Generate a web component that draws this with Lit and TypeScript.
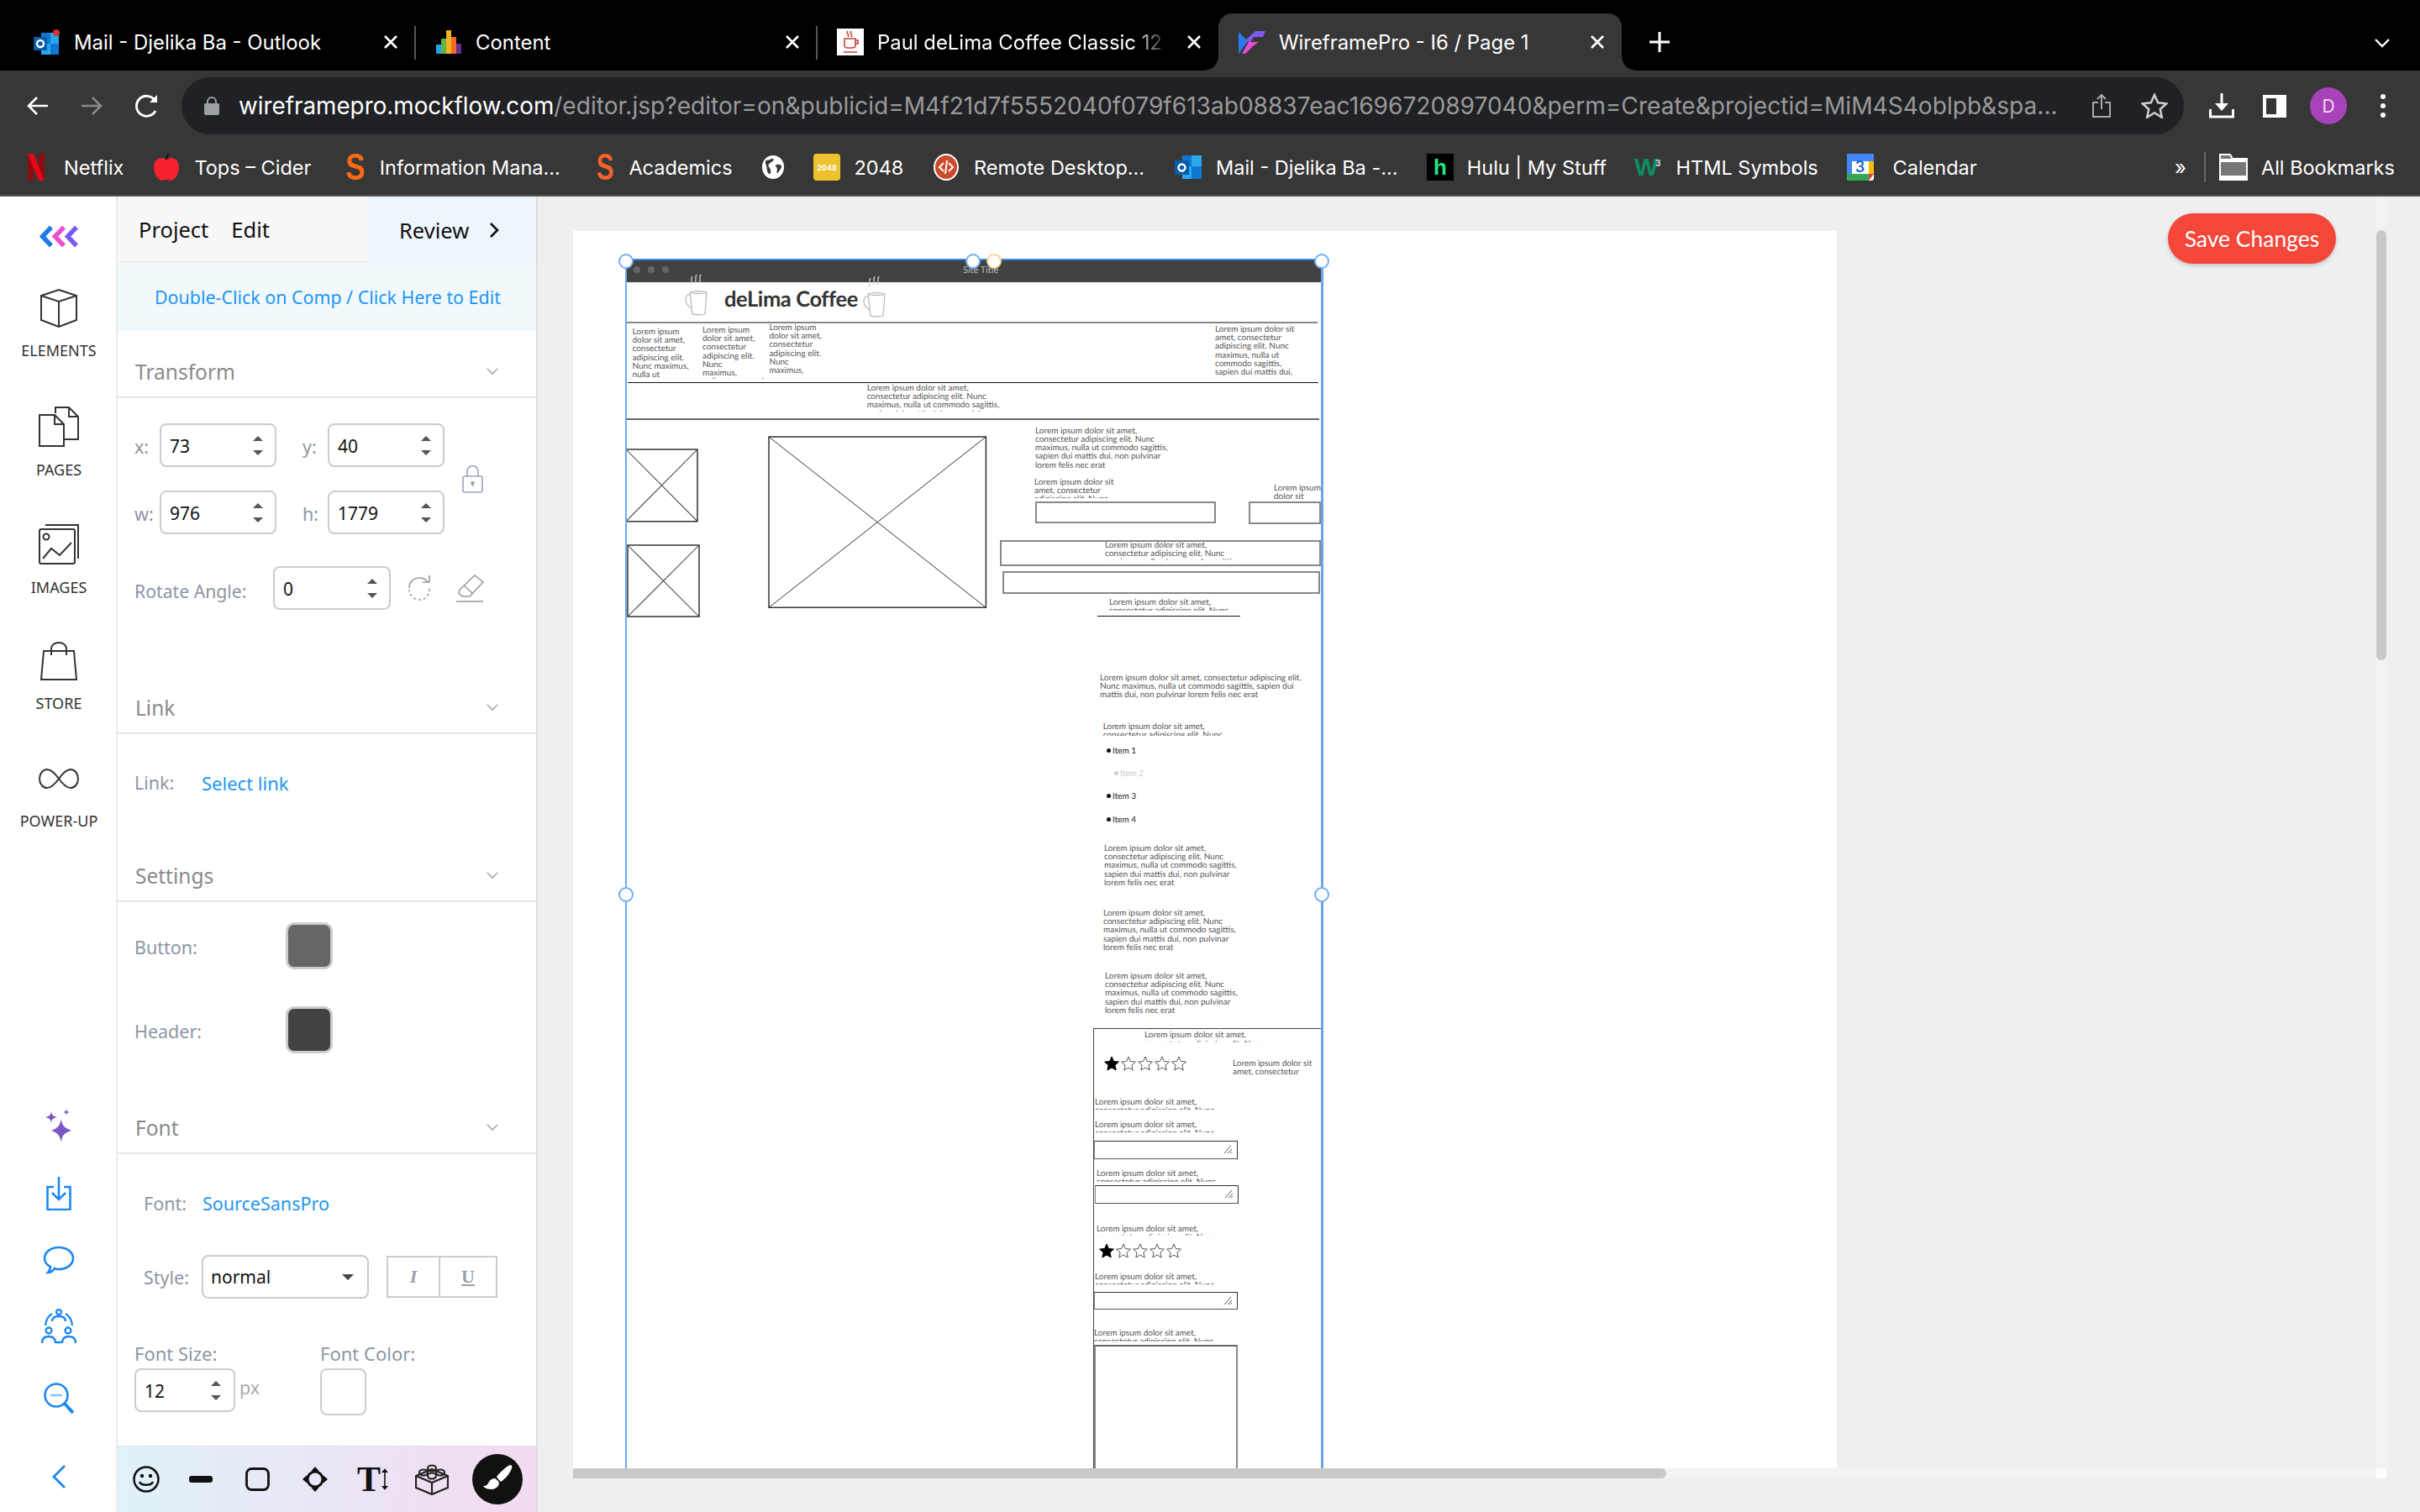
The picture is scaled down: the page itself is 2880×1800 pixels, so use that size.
import { LitElement, html, css } from "lit";
import { customElement } from "lit/decorators.js";

const URL_TAIL =
  "/editor.jsp?editor=on&publicid=M4f21d7f5552040f079f613ab08837eac1696720897040&perm=Create&projectid=MiM4S4oblpb&spa...";

// favicons, all drawn small
const ico = {
  outlook: html`<svg width="32" height="30" viewBox="0 0 32 30"><rect x="9" y="4" width="21" height="26" fill="#28a8ea"/><rect x="9" y="4" width="11" height="13" fill="#0f78d4"/><rect x="20" y="17" width="10" height="13" fill="#0f78d4"/><rect x="0" y="9" width="16" height="16" fill="#0a5ba8"/><circle cx="8" cy="17" r="4" fill="none" stroke="#fff" stroke-width="2.4"/><circle cx="27" cy="4" r="4" fill="#d13438"/></svg>`,
  outlook2: html`<svg width="32" height="32" viewBox="0 0 32 32"><rect x="9" y="2" width="23" height="28" fill="#28a8ea"/><rect x="9" y="2" width="11" height="13" fill="#0f78d4"/><rect x="20" y="15" width="12" height="15" fill="#0f78d4"/><rect x="0" y="8" width="17" height="17" fill="#0a5ba8"/><circle cx="8.500" cy="16.500" r="4" fill="none" stroke="#fff" stroke-width="2.400"/></svg>`,
  chart: html`<svg width="30" height="28" viewBox="0 0 30 28"><rect x="0" y="17" width="6" height="11" fill="#1ea7e1"/><rect x="6" y="10" width="6" height="18" fill="#62b346"/><rect x="12" y="0" width="6" height="28" fill="#f5b120"/><rect x="18" y="8" width="6" height="20" fill="#ee6a2b"/><rect x="24" y="16" width="6" height="12" fill="#6b2d8e"/></svg>`,
  paul: html`<svg width="32" height="32" viewBox="0 0 32 32"><rect width="32" height="32" fill="#fff"/><path d="M13 3c-3 3 3 4 0 7M17 3c-3 3 3 4 0 7M9 12h13v8c0 2-2 3-4 3h-5c-2 0-4-1-4-3zM22 14h3v4h-3M8 28h16" fill="none" stroke="#c6403a" stroke-width="1.6"/></svg>`,
  wf: html`<svg width="32" height="28" viewBox="0 0 32 28"><path d="M0 2l11 11-11 15z" fill="#2a7bf0"/><path d="M4 28l8-14h12l-7 5-9 9z" fill="#e94bd0"/><path d="M6 14L20 1h12l-3 7H18l-4 6z" fill="#7a5cf0"/></svg>`,
  netflix: html`<svg width="20" height="32" viewBox="0 0 20 32"><rect width="7" height="32" fill="#8e0c12"/><rect x="13" width="7" height="32" fill="#8e0c12"/><path d="M0 0h7l13 32h-7z" fill="#e50914"/></svg>`,
  apple: html`<svg width="32" height="32" viewBox="0 0 32 32"><path d="M16 7C12 3 1 4 1 16c0 9 6 16 10 16 2 0 3-1 5-1s3 1 5 1c4 0 10-7 10-16C31 4 20 3 16 7z" fill="#f5222d"/><path d="M16 7c0-3 1-5 3-7" stroke="#111" stroke-width="2" fill="none"/></svg>`,
  globe: html`<svg width="28" height="32" viewBox="0 0 30 32"><ellipse cx="15" cy="16" rx="14" ry="15" fill="#fff"/><path d="M6 7c4 1 6-2 9-2 2 2-1 4-3 5s-4 3-2 6 3 5 1 9c-3-1-4-5-4-8S4 11 6 7zM19 13c3-1 6 0 7 2-1 3-3 7-6 9-1-3 1-5 0-7s-3-3-1-4z" fill="#373737"/></svg>`,
  remote: html`<svg width="30" height="32" viewBox="0 0 30 32"><ellipse cx="15" cy="16" rx="14" ry="15" fill="#cc4b2c" stroke="#fff" stroke-width="2"/><path d="M12 11l-5 5 5 5M18 11l5 5-5 5M16 8l-2 16" fill="none" stroke="#fff" stroke-width="2"/></svg>`,
  cal: html`<svg width="32" height="32" viewBox="0 0 32 32"><rect width="32" height="32" rx="3" fill="#fff"/><path d="M0 3a3 3 0 013-3h26a3 3 0 013 3v6H0z" fill="#4285f4"/><rect x="0" y="9" width="6" height="15" fill="#4285f4"/><rect x="26" y="9" width="6" height="15" fill="#fbbc04"/><path d="M0 24h26v8H3a3 3 0 01-3-3z" fill="#34a853"/><path d="M26 24h6l-6 8z" fill="#ea4335"/></svg>`,
  folder: html`<svg width="34" height="32" viewBox="0 0 34 32"><path d="M1 1h12l3 5h17v25H1z" fill="#777" stroke="#fff" stroke-width="2"/><path d="M1 6h32v4H1zM1 26h32v5H1z" fill="#fff"/></svg>`,
};

const tabs = [
  { icon: ico.outlook, title: "Mail - Djelika Ba - Outlook" },
  { icon: ico.chart, title: "Content" },
  { icon: ico.paul, title: "Paul deLima Coffee Classic 12", fade: true },
];

// iw: from icon start to label start, w: from icon start to next icon
const marks = [
  { icon: ico.netflix, label: "Netflix", iw: 43, w: 149 },
  { icon: ico.apple, label: "Tops – Cider", iw: 49.4, w: 226.6 },
  { icon: html`<span class="ltr big">S</span>`, label: "Information Mana...", iw: 43.2, w: 298.4 },
  { icon: html`<span class="ltr">S</span>`, label: "Academics", iw: 41.4, w: 199 },
  { icon: ico.globe, label: "", iw: 28, w: 62 },
  { icon: html`<span class="sq2048">2048</span>`, label: "2048", iw: 48.5, w: 143 },
  { icon: ico.remote, label: "Remote Desktop...", iw: 48, w: 286.6 },
  { icon: ico.outlook2, label: "Mail - Djelika Ba -...", iw: 49.4, w: 300.4 },
  { icon: html`<span class="hulu">h</span>`, label: "Hulu | My Stuff", iw: 47.8, w: 247 },
  { icon: html`<span class="w3">W<sup>3</sup></span>`, label: "HTML Symbols", iw: 49.6, w: 252.6 },
  { icon: html`<span class="calbox">${ico.cal}<b>3</b></span>`, label: "Calendar", iw: 55, w: 200 },
];

const closeX = html`<svg class="x" width="24" height="24" viewBox="0 0 24 24"><path d="M5 5l14 14M19 5L5 19" stroke="#fff" stroke-width="2.600"/></svg>`;

@customElement("browser-chrome")
class BrowserChrome extends LitElement {
  static styles = css`
    :host { display: block; height: 234px; background: #373737; color: #fff; font-family: Inter, sans-serif; font-size: 23.900px; }
    .strip { height: 84px; background: #000; display: flex; padding: 16px 0 0 16px; box-sizing: border-box; }
    .tab { width: 478px; height: 68px; display: flex; align-items: center; padding-left: 24px; box-sizing: border-box; position: relative; }
    .tab .fav { width: 32px; display: flex; justify-content: center; margin-right: 16px; flex: none; }
    .tab .title { flex: 1; white-space: nowrap; overflow: hidden; }
    .fade { -webkit-mask-image: linear-gradient(90deg, #000 88%, transparent 100%); }
    .tab .x { width: 24px; margin: 0 17px 0 18px; flex: none; }
    .tab.sep::after { content: ""; position: absolute; right: -1px; top: 15px; width: 2px; height: 40px; background: #555; }
    .tab.on { background: #373737; border-radius: 16px 16px 0 0; width: 480px; }
    .tab.on::before, .tab.on::after { content: ""; position: absolute; bottom: 0; width: 16px; height: 16px; }
    .tab.on::before { left: -16px; background: radial-gradient(circle at 0 0, #000 15px, #373737 16px); }
    .tab.on::after { right: -16px; background: radial-gradient(circle at 100% 0, #000 15px, #373737 16px); }
    .plus { margin: 21px 0 0 32px; }
    .more { margin: 29px 35px 0 auto; }
    .bar { height: 76px; display: flex; align-items: flex-end; }
    .nav { width: 216px; height: 68px; display: flex; align-items: center; padding-left: 32px; box-sizing: border-box; flex: none; }
    .nav svg { margin-right: 38px; flex: none; }
    .nav svg:last-child { margin-right: 0; }
    .omni { width: 2383px; height: 68px; border-radius: 34px; background: #202124; display: flex; align-items: center; padding-left: 27px; box-sizing: border-box; flex: none; }
    .omni .url { width: 2184px; margin-left: 23px; white-space: nowrap; overflow: hidden; font-size: 28.100px; color: #9a9a9a; flex: none; }
    .omni .url b { font-weight: 400; font-size: 27.800px; color: #fff; }
    .omni .share { margin-left: 21px; flex: none; }
    .omni .star { margin-left: 35px; flex: none; }
    .right { height: 68px; display: flex; align-items: center; }
    .right .dl { margin-left: 30px; }
    .right .side { margin-left: 34px; }
    .avatar { margin-left: 28px; width: 44px; height: 44px; border-radius: 50%; background: #a742b8; color: #f0d8f5; font-size: 21px; display: flex; align-items: center; justify-content: center; }
    .right .dots { margin-left: 40px; }
    .marks { height: 74px; box-sizing: border-box; display: flex; align-items: center; padding: 6px 0 0 33px; border-bottom: 2px solid #555; }
    .mark { display: flex; align-items: center; white-space: nowrap; flex: none; font-size: 23.500px; }
    .mark .i { display: flex; align-items: center; flex: none; }
    .ltr { font: 700 44px/32px "Liberation Sans", sans-serif; color: #f4612a; width: 20px; text-align: center; display: inline-block; transform: scaleX(0.72); }
    .ltr.big { color: #fb6a12; width: 23px; transform: scaleX(0.8); }
    .sq2048 { width: 32px; height: 32px; border-radius: 4px; background: #edc22e; color: #fff; font-size: 9px; font-weight: 700; display: flex; align-items: center; justify-content: center; }
    .hulu { width: 32px; height: 32px; background: #000; color: #1ce783; font: 700 26px "Liberation Sans", sans-serif; text-align: center; line-height: 32px; }
    .w3 { width: 34px; color: #0a8f63; font: 700 30px/32px "Liberation Sans", sans-serif; letter-spacing: -3px; }
    .w3 sup { font-size: 11px; line-height: 0; color: #ddd; letter-spacing: 0; }
    .calbox { position: relative; width: 32px; height: 32px; display: block; }
    .calbox b { position: absolute; inset: 5px 0 0; text-align: center; font-size: 18px; line-height: 22px; color: #1a5fc8; font-weight: 600; }
    .chev { width: 34.700px; }
    .vbar { width: 2px; height: 36px; background: #666; margin-right: 16.300px; flex: none; }
    .all { display: flex; align-items: center; gap: 16px; white-space: nowrap; font-size: 23.500px; }
    .gap { width: 190.400px; flex: none; }
  `;

  render() {
    return html`
      <div class="strip">
        ${tabs.map(
          (t, i) => html`<div class="tab ${i < 2 ? "sep" : ""}">
            <span class="fav">${t.icon}</span>
            <span class="title ${t.fade ? "fade" : ""}">${t.title}</span>
            ${closeX}
          </div>`
        )}
        <div class="tab on">
          <span class="fav">${ico.wf}</span>
          <span class="title">WireframePro - I6 / Page 1</span>
          ${closeX}
        </div>
        <svg class="plus" width="26" height="26" viewBox="0 0 26 26"><path d="M13 1v24M1 13h24" stroke="#fff" stroke-width="3"/></svg>
        <svg class="more" width="20" height="12" viewBox="0 0 20 12"><path d="M2 2l8 8 8-8" fill="none" stroke="#fff" stroke-width="2.4"/></svg>
      </div>
      <div class="bar">
        <div class="nav">
          <svg width="26" height="26" viewBox="0 0 26 26"><path d="M25 13H3M12 3L2 13l10 10" fill="none" stroke="#fff" stroke-width="2.6"/></svg>
          <svg width="26" height="26" viewBox="0 0 26 26"><path d="M1 13h22M14 3l10 10-10 10" fill="none" stroke="#8a8a8a" stroke-width="2.6"/></svg>
          <svg width="30" height="28" viewBox="0 0 30 28"><path d="M25 20a12 12 0 11-1-13" fill="none" stroke="#fff" stroke-width="2.8"/><path d="M27 1v9h-9z" fill="#fff"/></svg>
        </div>
        <div class="omni">
          <svg width="18" height="22" viewBox="0 0 18 22"><path d="M4 9V6a5 5 0 0110 0v3" fill="none" stroke="#9aa0a6" stroke-width="2"/><rect y="8" width="18" height="14" rx="2" fill="#9aa0a6"/></svg>
          <span class="url"><b>wireframepro.mockflow.com</b>${URL_TAIL}</span>
          <svg class="share" width="24" height="28" viewBox="0 0 24 28"><path d="M8 10H2v17h20V10h-6M12 18V2M7 6l5-5 5 5" fill="none" stroke="#aaa" stroke-width="2"/></svg>
          <svg class="star" width="32" height="30" viewBox="0 0 32 30"><path d="M16 2l4.200 9.200 10 1.100-7.400 6.700 2 9.800L16 23.200 7.200 28.800l2-9.800L1.800 12.300l10-1.100z" fill="none" stroke="#ccc" stroke-width="2.600"/></svg>
        </div>
        <div class="right">
          <svg class="dl" width="30" height="30" viewBox="0 0 30 30"><path d="M15 0v19" stroke="#fff" stroke-width="3"/><path d="M7 12l8 9 8-9z" fill="#fff"/><path d="M1.500 19v9h27v-9" fill="none" stroke="#fff" stroke-width="3"/></svg>
          <svg class="side" width="28" height="27" viewBox="0 0 28 27"><rect x="2" y="2" width="24" height="23" fill="none" stroke="#fff" stroke-width="4"/><rect x="16" y="2" width="10" height="23" fill="#fff"/></svg>
          <span class="avatar">D</span>
          <svg class="dots" width="6" height="28" viewBox="0 0 6 28"><circle cx="3" cy="3" r="3" fill="#fff"/><circle cx="3" cy="14" r="3" fill="#fff"/><circle cx="3" cy="25" r="3" fill="#fff"/></svg>
        </div>
      </div>
      <div class="marks">
        ${marks.map(
          (m) => html`<div class="mark" style="width:${m.w}px"><span class="i" style="width:${m.iw}px">${m.icon}</span>${m.label ? html`<span>${m.label}</span>` : ""}</div>`
        )}
        <span class="gap"></span>
        <span class="chev">»</span>
        <span class="vbar"></span>
        <div class="all">${ico.folder}<span>All Bookmarks</span></div>
      </div>
    `;
  }
}

const railItems = [
  {
    label: "ELEMENTS",
    icon: html`<svg width="44" height="46" viewBox="0 0 44 46" fill="none" stroke="#333" stroke-width="2"><path d="M22 1l21 7v29l-21 8-21-8V8zM1 8l21 7 21-7M22 15v30"/></svg>`,
  },
  {
    label: "PAGES",
    icon: html`<svg width="48" height="48" viewBox="0 0 48 48" fill="none" stroke="#333" stroke-width="2"><path d="M20 8V1h16l11 11v27H30"/><path d="M36 1v11h11"/><path d="M1 10h18l11 11v26H1z"/><path d="M19 10v11h11"/></svg>`,
  },
  {
    label: "IMAGES",
    icon: html`<svg width="48" height="48" viewBox="0 0 48 48" fill="none" stroke="#333" stroke-width="2"><rect x="1" y="6" width="42" height="41" rx="2"/><path d="M8 1h39v40"/><circle cx="9" cy="15" r="3.500"/><path d="M5 41l10-12 10 8 14-15"/></svg>`,
  },
  {
    label: "STORE",
    icon: html`<svg width="44" height="46" viewBox="0 0 44 46" fill="none" stroke="#333" stroke-width="2"><path d="M4 11h36l3 34H1z"/><path d="M13 16V8a9 7 0 0118 0v8"/></svg>`,
  },
  {
    label: "POWER-UP",
    icon: html`<svg width="48" height="46" viewBox="0 0 48 46" fill="none" stroke="#333" stroke-width="2"><path d="M24 23c-5-7-9-11-14-11C5 12 1 17 1 23s4 11 9 11c5 0 9-4 14-11 5-7 9-11 14-11 5 0 9 5 9 11s-4 11-9 11c-5 0-9-4-14-11z"/></svg>`,
  },
];

@customElement("tool-rail")
class ToolRail extends LitElement {
  static styles = css`
    :host { display: flex; flex-direction: column; align-items: center; width: 136px; padding-left: 2px; height: 1566px; border-right: 2px solid #ececec; background: #fff; font-family: "Noto Sans", sans-serif; flex: none; }
    .logo { margin-top: 34px; margin-bottom: 49px; }
    .item { height: 140px; display: flex; flex-direction: column; align-items: center; flex: none; color: #333; font-size: 18px; }
    .item span { margin-top: 15px; line-height: 24px; }
    .tools { margin-top: auto; display: flex; flex-direction: column; align-items: center; }
    .tools svg { display: block; flex: none; }
    .tools svg:nth-child(2) { margin-top: 41px; }
    .tools svg:nth-child(3) { margin-top: 42px; }
    .tools svg:nth-child(4) { margin-top: 39px; }
    .tools svg:nth-child(5) { margin-top: 46px; }
    .tools svg:nth-child(6) { margin-top: 59px; margin-bottom: 27px; }
  `;

  render() {
    return html`
      <svg class="logo" width="46" height="27" viewBox="0 0 46 27" fill="none" stroke-width="5.500"><path d="M14 2.500L3.500 13.500 14 24.500" stroke="#1f7ae8"/><path d="M29 2.500L18.500 13.500 29 24.500" stroke="#ee4fd0"/><path d="M44 2.500L33.500 13.500 44 24.500" stroke="#7a5cf0"/></svg>
      ${railItems.map((r) => html`<div class="item">${r.icon}<span>${r.label}</span></div>`)}
      <div class="tools">
        <svg width="32" height="40" viewBox="0 0 32 40" fill="#7e57c2"><path d="M19 12c1 8 3 10 12 14-9 3-11 5-12 14-2-9-4-11-12-14 8-3 10-6 12-14z"/><path d="M7 3c.5 4 2 6 7 7-5 1-6.500 3-7 7-.5-4-2-6-7-7 5-1 6.500-3 7-7z"/><path d="M25 0c.5 3 1 3.500 4 4-3 .5-3.500 1-4 4-.5-3-1-3.500-4-4 3-.5 3.500-1 4-4z"/></svg>
        <svg width="30" height="40" viewBox="0 0 30 40" fill="none" stroke="#1e88f0" stroke-width="2.600"><path d="M9 12H1.500v27h27V12H21M15 0v27M7 19l8 8 8-8"/></svg>
        <svg width="38" height="36" viewBox="0 0 38 36" fill="none" stroke="#1e88f0" stroke-width="2.600"><path d="M19 2c10 0 17 6 17 13s-7 13-17 13c-2 0-4 0-5-1-2 3-5 5-8 5 2-2 3-4 3-7-4-2-7-6-7-10C2 8 9 2 19 2z"/></svg>
        <svg width="42" height="42" viewBox="0 0 42 42" fill="none" stroke="#1e88f0" stroke-width="2.300"><circle cx="21" cy="4" r="3"/><path d="M13 15c0-4 3-6 8-6s8 2 8 6M5 20C6 12 9 8 13 6M37 20c-1-8-4-12-8-14"/><circle cx="9" cy="26" r="3.500"/><circle cx="32" cy="26" r="3.500"/><path d="M1 41c0-6 3-8 8-8s8 2 8 8M41 41c0-6-3-8-8-8s-8 2-8 8M17 40h7"/></svg>
        <svg width="36" height="38" viewBox="0 0 36 38" fill="none" stroke="#1e88f0" stroke-width="2.600"><circle cx="15" cy="15" r="13.500"/><path d="M8 15h14" stroke="#8fc4f7"/><path d="M25 25l10 11" stroke-width="4"/></svg>
        <svg width="18" height="30" viewBox="0 0 18 30" fill="none" stroke="#1e88f0" stroke-width="2.800"><path d="M16 2L3 15l13 13"/></svg>
      </div>
    `;
  }
}

const chevDown = html`<svg width="14" height="8" viewBox="0 0 14 8"><path d="M1 1l6 6 6-6" fill="none" stroke="#9a9a9a" stroke-width="1.400"/></svg>`;
const spin = html`<span class="spin"><i></i><i></i></span>`;
const num = (v: string) => html`<div class="num"><span>${v}</span>${spin}</div>`;
const head = (t: string) => html`<div class="head"><span>${t}</span>${chevDown}</div>`;

@customElement("props-panel")
class PropsPanel extends LitElement {
  static styles = css`
    :host { display: block; width: 498px; height: 1566px; flex: none; border-right: 2px solid #dcdcdc; background: #fff; font-family: "Noto Sans", sans-serif; font-size: 21.500px; color: #8c96a5; }
    .tabs { height: 79px; display: flex; background: #f8f8f8; box-sizing: border-box; border-bottom: 2px solid #eee; color: #111; font-size: 25.500px; }
    .tabs .l { width: 299px; display: flex; align-items: center; padding-left: 25px; gap: 27px; box-sizing: border-box; }
    .tabs .r { flex: 1; background: #edf5fd; display: flex; align-items: center; padding-left: 36px; margin-bottom: -2px; gap: 24px; }
    .hint { height: 81px; background: #f2f9fd; color: #2196f3; display: flex; align-items: center; padding-left: 44px; font-size: 21.400px; white-space: nowrap; }
    .head { height: 60px; margin-top: 20px; box-sizing: border-box; border-bottom: 2px solid #e6e6e6; display: flex; align-items: center; justify-content: space-between; padding: 0 45px 2px 21px; color: #8a8a8a; font-size: 24.500px; }
    .xf { height: 320px; box-sizing: border-box; padding: 30px 0 0 20px; }
    .grid { display: grid; grid-template-columns: 30px 139px 31px 30px 139px auto; grid-template-rows: 52px 52px; row-gap: 28px; align-items: center; }
    .grid > span { padding-top: 2px; }
    .lock { grid-column: 6; grid-row: 1 / span 2; margin-left: 21px; }
    .num { height: 52px; box-sizing: border-box; border: 2px solid #ccc; border-radius: 8px; color: #111; font-size: 21px; display: flex; align-items: center; justify-content: space-between; padding: 2px 14px 0 10px; background: #fff; }
    .spin { display: flex; flex-direction: column; gap: 11px; margin-top: -2px; }
    .spin i { display: block; width: 0; height: 0; border-left: 6px solid transparent; border-right: 6px solid transparent; }
    .spin i:first-child { border-bottom: 6px solid #555; }
    .spin i:last-child { border-top: 6px solid #555; }
    .rot { display: flex; align-items: center; margin-top: 38px; }
    .rot .lb { width: 165px; font-size: 21.200px; padding-top: 6px; }
    .rot .num { width: 140px; }
    .rot .a { margin-left: 19px; }
    .rot .b { margin-left: 28px; }
    .linkb { height: 120px; box-sizing: border-box; padding: 43px 0 0 20px; display: flex; line-height: 30px; }
    .linkb .lb { width: 80px; }
    a { color: #2196f3; font-size: 22px; }
    .setb { height: 220px; box-sizing: border-box; padding: 24px 0 0 20px; }
    .sw { display: flex; align-items: center; height: 56px; margin-bottom: 44px; }
    .sw .lb { width: 180px; padding-top: 3px; }
    .sw i { display: block; width: 56px; height: 56px; box-sizing: border-box; border: 3px solid #ccc; border-radius: 10px; }
    .sw .s1 { background: #666; }
    .sw .s2 { background: #424242; }
    .fontb { height: 347px; box-sizing: border-box; padding: 44px 0 0 31px; }
    .fnt { display: flex; line-height: 30px; }
    .fnt .lb { width: 70px; }
    .fnt a { font-size: 21.500px; }
    .sty { display: flex; align-items: center; margin-top: 46px; }
    .sty .lb { width: 69px; }
    .sel { width: 199px; height: 52px; box-sizing: border-box; border: 2px solid #ccc; border-radius: 8px; display: flex; align-items: center; justify-content: space-between; padding: 0 16px 0 9px; color: #111; font-size: 21px; }
    .sel i { width: 0; height: 0; border-left: 7px solid transparent; border-right: 7px solid transparent; border-top: 7px solid #444; }
    .iu { display: flex; margin-left: 21px; height: 50px; box-sizing: border-box; border: 2px solid #ccc; font: 700 22px "Liberation Serif", serif; color: #9aa0a8; }
    .iu span { display: flex; align-items: center; justify-content: center; width: 60px; }
    .iu span + span { width: 66px; border-left: 2px solid #ccc; text-decoration: underline; }
    .iu span:first-child { font-style: italic; }
    .sz { display: flex; margin: 50px 0 0 -11px; }
    .sz .c1 { width: 221px; }
    .sz .cap { line-height: 30px; height: 33px; white-space: nowrap; font-size: 22px; }
    .sz .row { display: flex; align-items: center; }
    .sz .num { width: 120px; padding-right: 15px; }
    .sz .px { margin-left: 5px; color: #aaa; margin-top: -8px; }
    .sz .blank { display: block; width: 55px; height: 56px; box-sizing: border-box; border: 2px solid #ccc; border-radius: 8px; }
    .bottom { height: 79px; background: linear-gradient(90deg, #e0f2fb, #f3daf0); display: flex; align-items: center; padding-left: 18px; box-sizing: border-box; border-top: 1px solid #e4e4e4; }
    .bottom > * { flex: none; }
    .bottom > :nth-child(2) { margin-left: 35px; }
    .bottom > :nth-child(3) { margin-left: 39px; }
    .bottom > :nth-child(4) { margin-left: 38px; }
    .bottom > :nth-child(5) { margin-left: 34px; }
    .bottom > :nth-child(6) { margin-left: 32px; }
    .bottom > :nth-child(7) { margin-left: 28px; }
    .tt { display: flex; align-items: center; width: 37px; font: 700 42px/1 "Liberation Serif", serif; color: #111; }
    .tt svg { margin-left: 1px; }
  `;

  render() {
    return html`
      <div class="tabs">
        <div class="l"><span>Project</span><span>Edit</span></div>
        <div class="r"><span>Review</span><svg width="12" height="20" viewBox="0 0 12 20"><path d="M2 2l8 8-8 8" fill="none" stroke="#111" stroke-width="2.600"/></svg></div>
      </div>
      <div class="hint">Double-Click on Comp / Click Here to Edit</div>
      ${head("Transform")}
      <div class="xf">
        <div class="grid">
          <span>x:</span>${num("73")}<span></span><span>y:</span>${num("40")}
          <svg class="lock" width="25" height="34" viewBox="0 0 25 34" fill="none" stroke="#9aa5b5" stroke-width="1.600"><path d="M6 14V8a6.500 6.500 0 0113 0v6"/><rect x="1" y="14" width="23" height="19" rx="2"/><circle cx="12.500" cy="22" r="1.500" fill="#9aa5b5"/><path d="M12.500 22v4"/></svg>
          <span>w:</span>${num("976")}<span></span><span>h:</span>${num("1779")}
        </div>
        <div class="rot">
          <span class="lb">Rotate Angle:</span>${num("0")}
          <svg class="a" width="30" height="32" viewBox="0 0 30 32" fill="none" stroke="#9a9a9a" stroke-width="1.600"><path d="M3 16C3 9 8 4 15 4c4 0 8 2 10 5"/><path d="M27 1v8h-8"/><path d="M27 17c0 8-5 13-12 13S3 24 3 18" stroke-dasharray="3 3"/></svg>
          <svg class="b" width="34" height="34" viewBox="0 0 34 34" fill="none" stroke="#9a9a9a" stroke-width="1.600"><path d="M5 19L23 2l10 8-16 17H8l-4-4zM10 14l10 9M1 33h32"/></svg>
        </div>
      </div>
      ${head("Link")}
      <div class="linkb"><span class="lb">Link:</span><a>Select link</a></div>
      ${head("Settings")}
      <div class="setb">
        <div class="sw"><span class="lb">Button:</span><i class="s1"></i></div>
        <div class="sw"><span class="lb">Header:</span><i class="s2"></i></div>
      </div>
      ${head("Font")}
      <div class="fontb">
        <div class="fnt"><span class="lb">Font:</span><a>SourceSansPro</a></div>
        <div class="sty">
          <span class="lb">Style:</span>
          <div class="sel"><span>normal</span><i></i></div>
          <div class="iu"><span>I</span><span>U</span></div>
        </div>
        <div class="sz">
          <div class="c1"><div class="cap">Font Size:</div><div class="row">${num("12")}<span class="px">px</span></div></div>
          <div><div class="cap">Font Color:</div><i class="blank"></i></div>
        </div>
      </div>
      <div class="bottom">
        <svg width="32" height="32" viewBox="0 0 32 32" fill="none" stroke="#111" stroke-width="2.500"><circle cx="16" cy="16" r="14.500"/><circle cx="11" cy="12" r="2.200" fill="#111" stroke="none"/><circle cx="21" cy="12" r="2.200" fill="#111" stroke="none"/><path d="M8 19c2 5 14 5 16 0"/></svg>
        <svg width="28" height="8" viewBox="0 0 28 8"><rect width="28" height="8" rx="3" fill="#111"/></svg>
        <svg width="29" height="28" viewBox="0 0 29 28"><rect x="1.500" y="1.500" width="26" height="25" rx="6" fill="none" stroke="#111" stroke-width="2.800"/></svg>
        <svg width="32" height="32" viewBox="0 0 32 32"><circle cx="16" cy="16" r="9" fill="none" stroke="#111" stroke-width="3"/><path d="M16 1l4.500 5h-9zM16 31l-4.500-5h9zM1 16l5-4.500v9zM31 16l-5 4.500v-9z" fill="#111"/></svg>
        <span class="tt">T<svg width="10" height="32" viewBox="0 0 10 32"><path d="M5 2v28" stroke="#111" stroke-width="2"/><path d="M5 0l5 6H0zM5 32l-5-6h10z" fill="#111"/></svg></span>
        <svg width="40" height="38" viewBox="0 0 40 38" fill="none" stroke="#222" stroke-width="2.200"><path d="M1 15l19-8 19 8v14l-19 8-19-8z"/><path d="M1 15l19 8 19-8M20 23v14"/><ellipse cx="20" cy="6" rx="5" ry="3.500"/><ellipse cx="10" cy="11" rx="5" ry="3.500"/><ellipse cx="30" cy="11" rx="5" ry="3.500"/><ellipse cx="20" cy="15" rx="5" ry="3.500"/></svg>
        <svg width="60" height="60" viewBox="0 0 60 60"><circle cx="30" cy="30" r="30" fill="#111"/><path d="M45 13c2 0 3 2 2 4-2 6-8 13-13 16-2-2-4-4-5-6 4-5 11-12 16-14z" fill="#fff"/><path d="M27 29c2 1 4 3 5 5 0 5-5 8-9 8-4 0-8-1-10-4 3 0 5-1 6-3 1-3 4-6 8-6z" fill="#fff"/></svg>
      </div>
    `;
  }
}

// wireframe items, in page coordinates
const OX = 682;
const OY = 275;
const LH = 10.25;
const at = (x: number, y: number, w: number, h: number) => `left:${x - OX}px;top:${y - OY}px;width:${w}px;height:${h}px`;

const L3 = "Lorem ipsum dolor sit amet,\nconsectetur adipiscing elit. Nunc\nmaximus, nulla ut commodo sagittis,";
const L2 = "Lorem ipsum dolor sit amet,\nconsectetur adipiscing elit. Nunc";
const L5 = L3 + "\nsapien dui mattis dui, non pulvinar\nlorem felis nec erat";
const NARROW = "Lorem ipsum\ndolor sit amet,\nconsectetur\nadipiscing elit.\nNunc\nmaximus,\nnulla ut commodo";
const SIDE = "Lorem ipsum dolor sit\namet, consectetur\nadipiscing elit. Nunc\nmaximus, nulla ut\ncommodo sagittis,\nsapien dui mattis dui,\nnon pulvinar";

// [x, first line centre, clip bottom, text]
const texts: [number, number, number, string][] = [
  [752.5, 395, 452, "Lorem ipsum\ndolor sit amet,\nconsectetur\nadipiscing elit.\nNunc maximus,\nnulla ut\ncommodo"],
  [836, 393, 451, NARROW],
  [915.4, 390, 447, NARROW],
  [1446, 392, 449, SIDE],
  [1031.7, 462, 490, L5],
  [1232, 512.7, 566, L5],
  [1231, 574, 593, "Lorem ipsum dolor sit\namet, consectetur\nadipiscing elit. Nunc"],
  [1516, 581, 595, "Lorem ipsum\ndolor sit"],
  [1315, 648.7, 667, L3],
  [1320, 717, 727, L2],
  [1309, 806.7, 840, "Lorem ipsum dolor sit amet, consectetur adipiscing elit.\nNunc maximus, nulla ut commodo sagittis, sapien dui\nmattis dui, non pulvinar lorem felis nec erat"],
  [1312.7, 865, 876, L2],
  [1314, 1010, 1060, L5],
  [1313, 1087, 1137, L5],
  [1315, 1162, 1212, L5],
  [1362, 1232.6, 1241, L2],
  [1467, 1266, 1285, "Lorem ipsum dolor sit\namet, consectetur"],
  [1303, 1312, 1320.5, L2],
  [1303, 1339, 1348, L2],
  [1305, 1397, 1407, L2],
  [1305, 1462.8, 1471, L2],
  [1303, 1520, 1529, L2],
  [1302, 1587, 1596.5, L2],
];

// [x0, y0, x1, y1]
const rects = [
  [1231.7, 597.3, 1447, 622.7],
  [1486, 597.3, 1572, 623.7],
  [1190, 642.7, 1572, 673.7],
  [1193, 680, 1571, 707],
];
const inputs = [
  [1301.7, 1358, 1472.7, 1379.7],
  [1303.3, 1411, 1474, 1432.7],
  [1302.3, 1538, 1473.3, 1559],
];
const crossed = [
  [745, 535, 830, 620.7],
  [746.5, 649, 831.5, 734],
  [915.4, 520, 1173.8, 723.3],
];
// [x0, x1, y, colour]
const rules: [number, number, number, string][] = [
  [744, 1568, 383, "#888"],
  [746.5, 1569, 454.5, "#111"],
  [744, 1570, 498, "#666"],
  [1306, 1476, 732.5, "#111"],
];
const listItems: [number, number, string, boolean][] = [
  [1320, 893.7, "Item 1", false],
  [1329, 920.7, "Item 2", true],
  [1320, 947.7, "Item 3", false],
  [1320, 975.7, "Item 4", false],
];
const handles: [number, number, boolean][] = [
  [744.5, 311, false],
  [1158, 311, false],
  [1182.5, 311, true],
  [1573, 311, false],
  [744.5, 1065, false],
  [1573, 1065, false],
];

const cup = (x: number, y: number) => html`<svg class="abs" style="${at(x, y, 30, 50)}" viewBox="0 0 30 50" fill="none" stroke="#bdbdbd" stroke-width="1.300"><path d="M15 1c-3 4 1 5-2 10M20 1c-3 4 1 5-2 10M10 3c-3 4 1 5-2 10" stroke="#d0d0d0"/><path d="M7 22c5-2 15-2 20 0l-2 26c-3 1-11 1-15 0zM7 22c0 2 20 2 20 0M7 25c-6-1-7 8-1 14l3 2"/></svg>`;
const stars = (x: number, y: number) => html`<div class="stars" style="${at(x, y, 100, 18)}">
  ${[0, 1, 2, 3, 4].map(
    (i) => html`<svg width="18" height="18" viewBox="0 0 18 18"><path d="M9 1l2.400 5.500 6 .6-4.500 4 1.300 5.900L9 14l-5.200 3 1.300-5.900-4.500-4 6-.6z" fill="${i ? "#fff" : "#000"}" stroke="${i ? "#555" : "#000"}" stroke-width="1"/></svg>`
  )}
</div>`;

@customElement("wire-canvas")
class WireCanvas extends LitElement {
  static styles = css`
    :host { display: block; flex: 1; position: relative; height: 1566px; overflow: hidden; background: #efefef; }
    .board { position: relative; margin: 41px 0 0 42px; width: 1504px; height: 1473px; background: #fff; overflow: hidden; font-family: Lato, sans-serif; text-rendering: geometricPrecision; }
    .abs, .t, .box, .rule, .h, .bar, .dot, .li, .stars { position: absolute; }
    .abs { overflow: visible; }
    .bar { background: #424242; }
    .dot { width: 8px; height: 8px; border-radius: 50%; background: #666; }
    .site { position: absolute; color: #bbb; font-size: 11px; line-height: 12px; white-space: nowrap; }
    .brand { position: absolute; font-weight: 700; font-size: 25.500px; letter-spacing: -0.400px; line-height: 30px; color: #333; white-space: nowrap; }
    .t { font-size: 10px; line-height: ${LH}px; color: #555; white-space: pre; overflow: hidden; }
    .box { box-sizing: border-box; border: 2px solid #888; background: transparent; }
    .dark { border: 1.500px solid #333; border-bottom-color: #555; border-left-color: #888; }
    .rule { height: 1.500px; }
    .li { font-size: 10px; line-height: 12px; color: #222; white-space: nowrap; display: flex; align-items: center; gap: 2px; }
    .li i { width: 5px; height: 5px; border-radius: 50%; background: #111; }
    .li.off { color: #ccc; }
    .li.off i { background: #ccc; }
    .stars { display: flex; gap: 2px; }
    .frame { position: absolute; box-sizing: border-box; border: 1.500px solid #444; border-bottom: none; }
    .ta { position: absolute; box-sizing: border-box; border: 2px solid #666; border-bottom: none; border-right-color: #888; border-left-color: #888; }
    .sel-t { position: absolute; height: 2px; background: #2f8be6; }
    .sel-l { position: absolute; width: 1.500px; background: #6aa9ec; }
    .sel-r { position: absolute; width: 3px; background: #6aa3e8; }
    .h { width: 18px; height: 18px; box-sizing: border-box; border-radius: 50%; border: 2px solid #6db0f2; background: #fff; }
    .h.o { border-color: #f5d78e; }
    .save { position: absolute; left: 1940px; top: 20px; width: 200px; height: 60px; border-radius: 30px; background: #f44639; color: #fff; font: 400 26.500px Lato, sans-serif; display: flex; align-items: center; justify-content: center; box-shadow: 0 2px 5px rgba(0, 0, 0, 0.2); }
    .htrack { position: absolute; left: 42px; top: 1514px; width: 2146px; height: 12px; background: #f3f3f3; }
    .hbar { position: absolute; left: 42px; top: 1514px; width: 1301px; height: 12px; background: #c8c8c8; border-radius: 0 6px 6px 0; }
    .vtrack { position: absolute; left: 2188px; top: 0; width: 12px; height: 1514px; background: #f2f2f2; }
    .vbar { position: absolute; left: 2188px; top: 40px; width: 12px; height: 512px; background: #c8c8c8; border-radius: 6px; }
    .corner { position: absolute; left: 2188px; top: 1514px; width: 12px; height: 12px; background: #fff; }
  `;

  render() {
    return html`
      <div class="board">
        <div class="bar" style="${at(744, 309, 829, 27)}"></div>
        ${[758, 775, 792].map((x) => html`<i class="dot" style="left:${x - 4 - OX}px;top:${317 - OY}px"></i>`)}
        <div class="site" style="left:${1146 - OX}px;top:${316 - OY}px">Site Title</div>
        ${cup(814, 326)} ${cup(1026, 328)}
        <div class="brand" style="left:${862 - OX}px;top:${341 - OY}px">deLima Coffee</div>
        ${rules.map(([a, b, y, c]) => html`<div class="rule" style="${at(a, y, b - a, 1.5)};background:${c}"></div>`)}
        ${texts.map(([x, c, clip, s]) => html`<div class="t" style="${at(x, c - LH / 2, 300, clip - c + LH / 2)}">${s}</div>`)}
        ${crossed.map(
          ([a, b, c, d]) => html`<svg class="abs" style="${at(a, b, c - a, d - b)}" viewBox="0 0 100 100" preserveAspectRatio="none" fill="none" stroke="#333"><rect width="100" height="100" stroke-width="1.500" vector-effect="non-scaling-stroke"/><path d="M0 0l100 100M100 0L0 100" stroke-width="1" vector-effect="non-scaling-stroke"/></svg>`
        )}
        ${rects.map(([a, b, c, d]) => html`<div class="box" style="${at(a, b, c - a, d - b)}"></div>`)}
        ${inputs.map(
          ([a, b, c, d]) => html`<div class="box dark" style="${at(a, b, c - a, d - b)}"></div>
            <svg class="abs" style="${at(c - 16, b + 5, 10, 11)}" viewBox="0 0 10 11" fill="none" stroke="#555" stroke-width="1"><path d="M0 10L8 1M4 10l5-5M7 10l2-2"/></svg>`
        )}
        ${listItems.map(
          ([x, y, s, off]) => html`<div class="li ${off ? "off" : ""}" style="left:${x - 3 - OX}px;top:${y - 6 - OY}px"><i></i><span>${s}</span></div>`
        )}
        <div class="frame" style="${at(1301.3, 1224.3, 273.4, 530)}"></div>
        ${stars(1314, 1257)} ${stars(1307.7, 1479.7)}
        <div class="ta" style="${at(1302.3, 1601, 171, 150)}"></div>
        <div class="sel-t" style="${at(744, 308, 829, 2)}"></div>
        <div class="sel-l" style="${at(744, 308, 1.5, 1445)}"></div>
        <div class="sel-r" style="${at(1572, 308, 3, 1445)}"></div>
        ${handles.map(([x, y, o]) => html`<div class="h ${o ? "o" : ""}" style="left:${x - 9 - OX}px;top:${y - 9 - OY}px"></div>`)}
      </div>
      <div class="save">Save Changes</div>
      <div class="htrack"></div>
      <div class="hbar"></div>
      <div class="vtrack"></div>
      <div class="vbar"></div>
      <div class="corner"></div>
    `;
  }
}

@customElement("app-root")
export class AppRoot extends LitElement {
  static styles = css`
    :host { display: block; width: 2880px; height: 1800px; overflow: hidden; background: #fff; }
    .main { display: flex; }
  `;

  render() {
    return html`
      <browser-chrome></browser-chrome>
      <div class="main">
        <tool-rail></tool-rail>
        <props-panel></props-panel>
        <wire-canvas></wire-canvas>
      </div>
    `;
  }
}
